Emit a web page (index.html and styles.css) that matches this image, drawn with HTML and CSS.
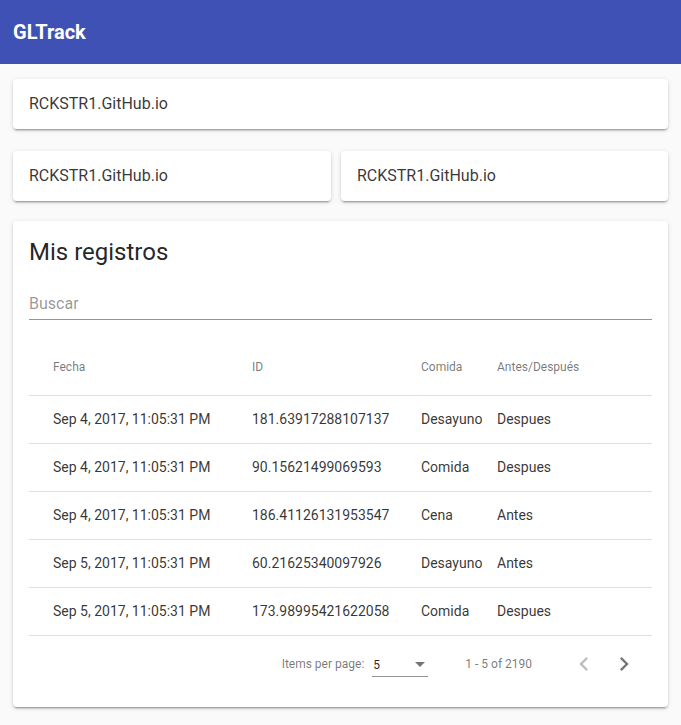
FILE: index.html
```html
<!DOCTYPE html>
<html lang="es">
<head>
<meta charset="utf-8">
<title>GLTrack</title>
<link rel="stylesheet" href="styles.css">
</head>
<body>
<header class="toolbar"><span class="brand">GLTrack</span></header>
<main class="content">
  <section class="card small first">RCKSTR1.GitHub.io</section>
  <div class="pair">
    <section class="card small">RCKSTR1.GitHub.io</section>
    <section class="card small">RCKSTR1.GitHub.io</section>
  </div>
  <section class="card records">
    <h1 class="title">Mis registros</h1>
    <div class="search"><span class="placeholder">Buscar</span></div>
    <div class="table">
      <div class="row head">
        <div class="cell">Fecha</div><div class="cell">ID</div><div class="cell">Comida</div><div class="cell">Antes/Después</div>
      </div>
      <div class="row">
        <div class="cell">Sep 4, 2017, 11:05:31 PM</div><div class="cell">181.63917288107137</div><div class="cell">Desayuno</div><div class="cell">Despues</div>
      </div>
      <div class="row">
        <div class="cell">Sep 4, 2017, 11:05:31 PM</div><div class="cell">90.15621499069593</div><div class="cell">Comida</div><div class="cell">Despues</div>
      </div>
      <div class="row">
        <div class="cell">Sep 4, 2017, 11:05:31 PM</div><div class="cell">186.41126131953547</div><div class="cell">Cena</div><div class="cell">Antes</div>
      </div>
      <div class="row">
        <div class="cell">Sep 5, 2017, 11:05:31 PM</div><div class="cell">60.21625340097926</div><div class="cell">Desayuno</div><div class="cell">Antes</div>
      </div>
      <div class="row">
        <div class="cell">Sep 5, 2017, 11:05:31 PM</div><div class="cell">173.98995421622058</div><div class="cell">Comida</div><div class="cell">Despues</div>
      </div>
    </div>
    <div class="paginator">
      <span class="ipp">Items per page:</span>
      <div class="select"><span class="val">5</span><span class="caret"></span></div>
      <span class="range">1 - 5 of 2190</span>
      <button class="nav disabled" aria-label="Previous page"><svg viewBox="0 0 24 24" width="28" height="28"><path d="M15.41 7.41L14 6l-6 6 6 6 1.41-1.41L10.83 12z"/></svg></button>
      <button class="nav" aria-label="Next page"><svg viewBox="0 0 24 24" width="28" height="28"><path d="M10 6L8.59 7.41 13.17 12l-4.58 4.59L10 18l6-6z"/></svg></button>
    </div>
  </section>
</main>
</body>
</html>
```

FILE: styles.css
```css
* { box-sizing: border-box; }
html, body { margin: 0; padding: 0; }
body {
  background: #fafafa;
  font-family: Roboto, "Noto Sans", sans-serif;
  color: rgba(0,0,0,.87);
}
.toolbar {
  height: 64px;
  background: #3f51b5;
  color: #fff;
  display: flex;
  align-items: center;
  padding: 0 13px;
}
.brand { font-size: 20px; font-weight: 700; }
.content {
  padding: 15px 13px 18px;
  display: flex;
  flex-direction: column;
  gap: 20px;
}
.card.first { margin-bottom: 2px; }
.pair {
  display: grid;
  grid-template-columns: 318px 1fr;
  gap: 10px;
}
.card {
  background: #fff;
  border-radius: 4px;
  box-shadow: 0 3px 1px -2px rgba(0,0,0,.2), 0 2px 2px 0 rgba(0,0,0,.14), 0 1px 5px 0 rgba(0,0,0,.12);
}
.card.small {
  padding: 15px 16px;
  font-size: 16px;
  line-height: 20px;
  height: 50px;
  color: rgba(0,0,0,.8);
}
.records { padding: 15px 16px 15px; }
.title {
  margin: 0;
  font-size: 24px;
  font-weight: 400;
  line-height: 32px;
}
.search {
  margin-top: 26px;
  padding-bottom: 5px;
  border-bottom: 1px solid rgba(0,0,0,.42);
  line-height: 20px;
  font-size: 16px;
}
.placeholder { color: rgba(0,0,0,.42); }
.table { margin-top: 20px; }
.row {
  display: grid;
  grid-template-columns: 223px 169px 76px 1fr;
  height: 48px;
  padding-bottom: 2px;
  align-items: center;
  border-bottom: 1px solid rgba(0,0,0,.12);
  font-size: 14px;
  color: rgba(0,0,0,.8);
}
.row.head {
  height: 56px;
  font-size: 12px;
  font-weight: 400;
  color: rgba(0,0,0,.54);
}
.cell:first-child { padding-left: 24px; }
.cell { white-space: nowrap; }
.paginator {
  height: 56px;
  display: flex;
  align-items: center;
  justify-content: flex-end;
  font-size: 12px;
  color: rgba(0,0,0,.54);
  padding-right: 8px;
}
.ipp { margin-right: 8px; }
.select {
  width: 56px;
  height: 24px;
  margin-top: 2px;
  display: flex;
  align-items: center;
  justify-content: space-between;
  border-bottom: 1px solid rgba(0,0,0,.42);
  color: rgba(0,0,0,.87);
  padding-left: 1px;
  padding-right: 3px;
}
.val { font-size: 12px; }
.caret {
  width: 0; height: 0;
  border-left: 5px solid transparent;
  border-right: 5px solid transparent;
  border-top: 5px solid rgba(0,0,0,.54);
}
.range { margin: 0 32px 0 37px; }
.nav {
  width: 40px;
  height: 40px;
  border: 0;
  background: transparent;
  padding: 0;
  display: flex;
  align-items: center;
  justify-content: center;
  fill: rgba(0,0,0,.54);
}
.nav.disabled { fill: rgba(0,0,0,.26); }
```
